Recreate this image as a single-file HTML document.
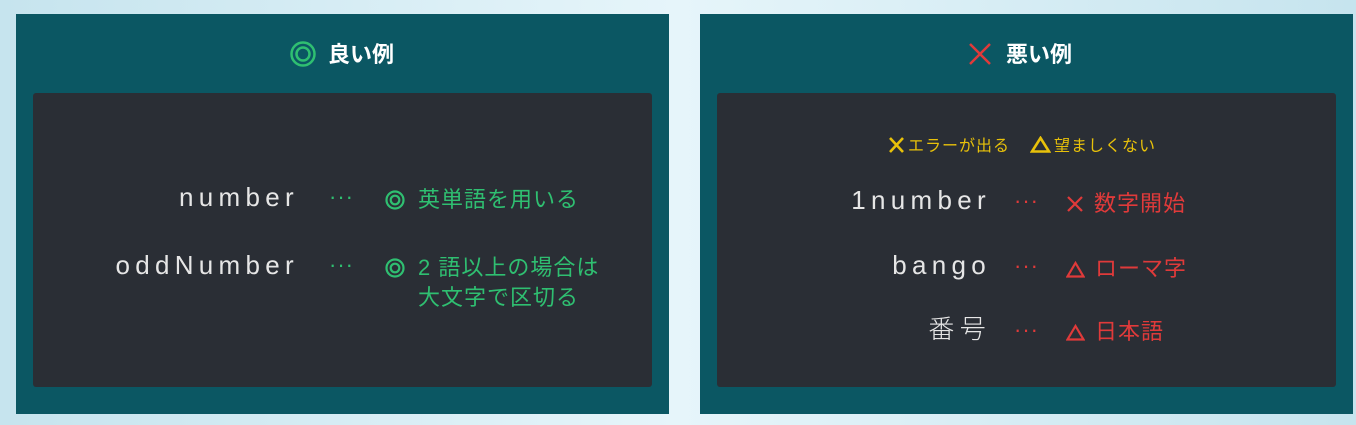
<!DOCTYPE html>
<html><head><meta charset="utf-8"><style>
body{margin:0;width:1356px;height:425px;overflow:hidden;background:linear-gradient(90deg,#c6e4ee 0%,#e6f5fa 50%,#c6e4ee 100%);font-family:"Liberation Sans","Noto Sans CJK JP",sans-serif;position:relative}
.p{position:absolute;top:14px;height:400px;background:#0b5763}
.in{position:absolute;top:79px;height:294px;background:#2a2e35;border-radius:3px}
.t{position:absolute;top:27px;color:#fff;font-weight:bold;font-size:22px;white-space:nowrap;line-height:28px}
.a{position:absolute;font-size:26px;color:#e6e6e6;letter-spacing:5.3px;font-weight:300;text-align:right;white-space:nowrap;line-height:30px}
.d{position:absolute;font-size:22px;white-space:nowrap;line-height:30px;letter-spacing:1px}
.g{color:#2fbf71}.r{color:#e03a3a}
.s{position:absolute;font-size:22px;white-space:nowrap;line-height:30px;letter-spacing:1px}
</style></head><body>
<div class="p" style="left:16px;width:653px">
 <div class="t" style="left:274px"><svg width="26" height="26" style="vertical-align:-5px;margin-right:12px"><circle cx="13" cy="13" r="11.5" fill="none" stroke="#2fbf71" stroke-width="2.5"/><circle cx="13" cy="13" r="6.5" fill="none" stroke="#2fbf71" stroke-width="2.5"/></svg>良い例</div>
 <div class="in" style="left:17px;width:619px">
  <div class="a" style="right:353px;top:89px">number</div>
  <div class="d g" style="left:296px;top:89px">···</div>
  <div class="s g" style="left:352px;top:92px"><svg width="20" height="20" style="vertical-align:-3px;margin-right:13px"><circle cx="10" cy="10" r="8.5" fill="none" stroke="#2fbf71" stroke-width="2.2"/><circle cx="10" cy="10" r="4.3" fill="none" stroke="#2fbf71" stroke-width="2.2"/></svg>英単語を用いる</div>
  <div class="a" style="right:353px;top:157px">oddNumber</div>
  <div class="d g" style="left:296px;top:157px">···</div>
  <div class="s g" style="left:352px;top:160px"><svg width="20" height="20" style="vertical-align:-3px;margin-right:13px"><circle cx="10" cy="10" r="8.5" fill="none" stroke="#2fbf71" stroke-width="2.2"/><circle cx="10" cy="10" r="4.3" fill="none" stroke="#2fbf71" stroke-width="2.2"/></svg>2 語以上の場合は<br><span style="margin-left:33px">大文字で区切る</span></div>
 </div>
</div>
<div class="p" style="left:700px;width:653px">
 <div class="t" style="left:268px"><svg width="24" height="24" style="vertical-align:-4px;margin-right:14px"><path d="M2 2L22 22M22 2L2 22" stroke="#e03a3a" stroke-width="2.5"/></svg>悪い例</div>
 <div class="in" style="left:17px;width:619px">
  <div style="position:absolute;left:171px;top:39px;color:#e8c10a;font-size:16px;letter-spacing:1px;white-space:nowrap"><svg width="17" height="16" style="vertical-align:-2px;margin-right:3px"><path d="M2 1L15 15M15 1L2 15" stroke="#e8c10a" stroke-width="2.6"/></svg>エラーが出る<svg width="21" height="17" style="vertical-align:-2px;margin-left:20px;margin-right:3px"><path d="M10.5 2L19 15.5H2Z" fill="none" stroke="#e8c10a" stroke-width="2.6"/></svg>望ましくない</div>
  <div class="a" style="right:345px;top:92px">1number</div>
  <div class="d r" style="left:297px;top:93px">···</div>
  <div class="s r" style="left:349px;top:96px"><svg width="18" height="18" style="vertical-align:-2px;margin-right:10px"><path d="M2 2L16 16M16 2L2 16" stroke="#e03a3a" stroke-width="2.2"/></svg>数字開始</div>
  <div class="a" style="right:345px;top:157px">bango</div>
  <div class="d r" style="left:297px;top:158px">···</div>
  <div class="s r" style="left:349px;top:161px"><svg width="19" height="17" style="vertical-align:-2px;margin-right:10px"><path d="M9.5 2L17.5 15.5H1.5Z" fill="none" stroke="#e03a3a" stroke-width="2.2"/></svg>ローマ字</div>
  <div class="a" style="right:345px;top:221px">番号</div>
  <div class="d r" style="left:297px;top:222px">···</div>
  <div class="s r" style="left:349px;top:224px"><svg width="19" height="17" style="vertical-align:-2px;margin-right:10px"><path d="M9.5 2L17.5 15.5H1.5Z" fill="none" stroke="#e03a3a" stroke-width="2.2"/></svg>日本語</div>
 </div>
</div>
</body></html>
